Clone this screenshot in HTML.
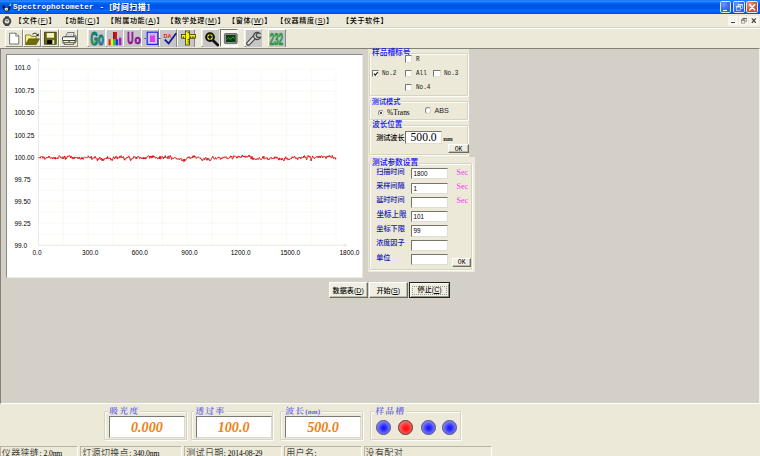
<!DOCTYPE html>
<html><head><meta charset="utf-8"><title>Spectrophotometer</title>
<style>
*{box-sizing:border-box;margin:0;padding:0}
html,body{width:760px;height:456px;overflow:hidden;background:#d4d0c8}
body{position:relative;font-family:"Liberation Sans","Noto Sans CJK SC",sans-serif;font-size:7px;color:#000;line-height:1}
.abs,.abs *{position:absolute}
#all{position:absolute;left:0;top:0;width:760px;height:456px;overflow:hidden}
#all div,#all span,#all svg{position:absolute;white-space:nowrap}
/* title */
#title{left:0;top:0;width:760px;height:14px;background:linear-gradient(to bottom,#0058ee 0%,#3593ff 6%,#288eff 10%,#127dff 14%,#036ffc 18%,#0262ee 26%,#0057e5 34%,#0054e3 44%,#0055eb 56%,#005bf5 66%,#026afe 76%,#0061fc 86%,#0052f0 92%,#004de8 96%,#0144d0 100%)}
.tt{color:#fff;top:3.9px;font-family:"Liberation Mono","Noto Sans CJK SC",monospace;font-weight:bold;font-size:7.7px;letter-spacing:0.13px;text-shadow:0.5px 0.5px 0 #0a2a8a}
.wb{top:1.4px;width:11.6px;height:11.8px;border-radius:1.8px;border:0.6px solid #dfe8ff;background:radial-gradient(circle at 30% 25%,#6b9cf6 0%,#3d75ea 40%,#2457d8 100%)}
#wclose{background:radial-gradient(circle at 30% 25%,#f0a080 0%,#e0603a 40%,#c63a1c 100%)}
/* menu */
#menu{left:0;top:14px;width:760px;height:13px;background:#ece9d8}
.mi{font-weight:500;top:4.3px;letter-spacing:0.6px;font-family:"Liberation Sans","Noto Sans CJK SC",sans-serif;font-size:7.1px;color:#000}
/* toolbar */
#tb{left:0;top:27px;width:760px;height:21px;background:#ece9d8;border-top:1px solid #d6d3c3;box-shadow:inset 0 1px 0 #fff}
.tbn{top:1.6px;width:17.8px;height:17.8px;background:#ece9d8;border-right:1px solid #8c8a7c;border-bottom:1px solid #8c8a7c;border-left:1px solid #fff;border-top:1px solid #fff}
.tbn.g::before{content:"";position:absolute;left:0.2px;top:0.2px;width:16.2px;height:16.2px;background:#c6c6c6}
.tbn svg{left:0;top:0;width:16px;height:16px}
/* mdi */
#mdi{left:0;top:48px;width:760px;height:356.4px;background:#d4d0c8;border-top:1.2px solid #848277;border-left:1.4px solid #848277;border-right:1.4px solid #f4f3ea;border-bottom:1px solid #fff}
#chartbox{left:6px;top:53.6px;width:357px;height:224.4px;background:#fff;border-top:1.4px solid #8d8b80;border-left:1.4px solid #8d8b80;border-right:1px solid #e9e7dd;border-bottom:1px solid #eeece4}
.yl{left:14.4px;text-align:left;font-size:6.5px;color:#000;height:9px;line-height:9px;transform:scaleY(1.18);transform-origin:0 50%}
.xl{text-align:left;top:247.6px;font-size:6.5px;color:#000;height:9px;line-height:9px;transform:scaleY(1.18);transform-origin:0 50%}
/* right panel */
#rp{left:367.5px;top:48.9px;width:101.9px;height:109.1px;background:#ece9d8}
#rp2{left:367.5px;top:157px;width:107px;height:115.4px;background:#ece9d8}
.gb{border:1px solid #d6d3c2;box-shadow:1px 1px 0 #fdfcf8, inset 1px 1px 0 #fdfcf8;border-radius:1px}
.gt{font-weight:500;color:#1010ff;font-size:7.7px;background:#ece9d8;padding:0 1px;height:8px;line-height:8px}
.cb{width:7.2px;height:7.2px;background:#fff;border-top:1px solid #7a786c;border-left:1px solid #7a786c;border-right:0.6px solid #e4e2d6;border-bottom:0.6px solid #e4e2d6}
.cl{font-family:"Liberation Mono","Noto Sans CJK SC",monospace;font-size:7.3px;color:#111;transform:scaleX(0.82);transform-origin:0 0}
.rb{width:6.6px;height:6.6px;border-radius:50%;background:#fff;border:0.9px solid #8a887c;border-right-color:#d8d6ca;border-bottom-color:#d8d6ca}
.inp{background:#fff;border-top:1.1px solid #77756a;border-left:1.1px solid #77756a;border-right:0.8px solid #e0ded2;border-bottom:0.8px solid #e0ded2}
.pl{font-weight:500;color:#1414b4;font-size:7.1px;height:9px;line-height:9px}
.sec{color:#f23cf2;font-family:"Liberation Serif",serif;font-size:8px}
.btn{background:#f0eee2;border-top:0.8px solid #fff;border-left:0.8px solid #fff;border-right:1px solid #6d6b60;border-bottom:1px solid #6d6b60;box-shadow:inset -0.7px -0.7px 0 #aaa89c;text-align:center;font-size:7.1px;font-weight:500;color:#000}
.it{font-size:6.3px;color:#000;left:1.2px;top:2.1px;transform:scaleY(1.15);transform-origin:0 50%}
/* bottom */
#bot{left:0;top:404.4px;width:760px;height:51.6px;background:#ece9d8}
.bgt{color:#5c5cea;font-size:8.6px;background:#ece9d8;padding:0 1px;height:10px;line-height:10px;font-family:"Liberation Serif","Noto Serif CJK SC","Noto Sans CJK SC",serif;font-weight:600;letter-spacing:1.5px;transform:skewX(-4deg);transform-origin:0 100%}
.vbox{background:#fff;border-top:1.3px solid #7c7a6f;border-left:1.3px solid #7c7a6f;border-right:0.8px solid #dcdacf;border-bottom:0.8px solid #dcdacf}
.val{font-family:"Liberation Serif",serif;font-style:italic;font-weight:bold;color:#f08010;font-size:14.1px;width:100%;text-align:center;left:0;top:2.7px;height:14px;line-height:14px}
.led{width:15.2px;height:15.2px;border-radius:50%;border:0.9px solid #4a4880;background:radial-gradient(circle at 52% 54%,#1414f4 0%,#2a2af6 22%,#6a6af8 55%,#a4a4f6 85%,#b4b4f0 100%)}
.led.r{border-color:#5a2c2c;background:radial-gradient(circle at 54% 56%,#ff0808 0%,#ff2020 25%,#f86060 60%,#f09090 88%,#eaa0a0 100%)}
/* status */
.sp{top:446.3px;height:12px;background:#ece9d8;border-top:1px solid #b8b5a6;border-left:1px solid #b8b5a6;border-right:0.7px solid #fff;border-bottom:0.7px solid #fff;overflow:hidden}
.st{left:0.8px;top:0.4px;font-size:9px;font-weight:300;color:#000;font-family:"Liberation Serif","Noto Sans CJK SC",sans-serif;height:11px;line-height:11px;letter-spacing:0.35px}
.st b{font-weight:normal;font-size:7.6px;letter-spacing:-0.1px;position:static;margin-left:-1.2px}
</style></head><body><div id="all">

<div id="title">
 <svg style="left:1px;top:2.5px;width:11px;height:10px" viewBox="0 0 11 10"><path d="M0.8 2.2 L2.6 2 L4.6 4.6 L6.8 5 L8.6 3 L9.6 3.4 L9.2 6.2 L7 8.4 L4.4 8.6 L2.4 6.6 Z" fill="#141a3a"/><path d="M3.6 5.2 Q5.4 4.4 7.2 5.4 L7 7.2 Q5.2 8.2 3.8 7 Z" fill="#f4f4f8"/><path d="M5 6.2 L6.4 6.2 L6 7 L5.2 7Z" fill="#a03030"/><path d="M8.2 2.8 L9.4 0.6 L10.2 1.6 L9.4 3.2Z" fill="#e8d040"/><path d="M8.6 0.8 L9.4 0.2 L9.8 1 Z" fill="#40c050"/><path d="M0.6 1.8 L2.2 2.2 L2 3 Z" fill="#30a0b0"/></svg>
 <div class="tt" style="left:13px">Spectrophotometer</div>
 <div class="tt" style="left:99.4px">-</div>
 <div class="tt" style="left:108.4px">[</div>
 <div class="tt" style="left:112.6px;top:4.9px;letter-spacing:0.8px;font-weight:900">时间扫描</div>
 <div class="tt" style="left:146px">]</div>
 <div class="wb" style="left:719.6px"><div style="left:2.2px;top:7.2px;width:4px;height:1.7px;background:#fff"></div></div>
 <div class="wb" style="left:733px"><svg style="left:0;top:0;width:10.4px;height:10.6px" viewBox="0 0 10.4 10.6"><path d="M4.3 2.9h4.2v3.6h-1.5M4.3 2.9v1.6" fill="none" stroke="#e8eeff" stroke-width="0.6"/><path d="M4 2.8h4.8" stroke="#fff" stroke-width="1"/><rect x="2.5" y="4.8" width="4.2" height="3.6" fill="none" stroke="#e8eeff" stroke-width="0.6"/><path d="M2.2 4.8h4.8" stroke="#fff" stroke-width="1"/></svg></div>
 <div class="wb" id="wclose" style="left:746.4px"><svg style="left:0;top:0;width:10.4px;height:10.6px" viewBox="0 0 10.4 10.6"><path d="M2.6 2.6 L7.8 8 M7.8 2.6 L2.6 8" stroke="#fff" stroke-width="1.5" stroke-linecap="round"/></svg></div>
</div>

<div id="menu">
 <svg style="left:1.6px;top:1.8px;width:10px;height:10.4px" viewBox="0 0 10 10.4"><rect x="2.9" y="0.2" width="4.2" height="10" rx="0.9" fill="#3c3c3c"/><circle cx="5" cy="5.2" r="4.3" fill="#484848"/><circle cx="5" cy="5.2" r="2.3" fill="#e4e4e4"/><path d="M5 5.4 L3.8 4 M5 5.4 L6.2 4" stroke="#222" stroke-width="0.7"/></svg>
 <div class="mi" style="left:14.6px">【文件(<u>F</u>)】</div>
 <div class="mi" style="left:61.5px">【功能(<u>C</u>)】</div>
 <div class="mi" style="left:106.8px">【附属功能(<u>A</u>)】</div>
 <div class="mi" style="left:166.6px">【数学处理(<u>M</u>)】</div>
 <div class="mi" style="left:228px">【窗体(<u>W</u>)】</div>
 <div class="mi" style="left:276.2px">【仪器精度(<u>S</u>)】</div>
 <div class="mi" style="left:342px">【关于软件】</div>
 <div style="left:728.4px;top:2.4px;width:9.2px;height:9.4px;background:#f6f5ee"><div style="left:3px;top:5.6px;width:3.2px;height:1.2px;background:#444"></div></div>
 <div style="left:739px;top:2.4px;width:9.2px;height:9.4px;background:#f6f5ee"><svg style="left:0;top:0;width:9.2px;height:9.4px" viewBox="0 0 9.2 9.4"><path d="M3.9 2.5h3.6v3h-1.4M3.9 2.5v1.4" fill="none" stroke="#666" stroke-width="0.55"/><path d="M3.7 2.4h4" stroke="#555" stroke-width="0.9"/><rect x="2.3" y="4.1" width="3.6" height="3" fill="none" stroke="#666" stroke-width="0.55"/><path d="M2.1 4.1h4" stroke="#555" stroke-width="0.9"/></svg></div>
 <div style="left:749.4px;top:2.4px;width:9.2px;height:9.4px;background:#f6f5ee"><svg style="left:0;top:0;width:9.2px;height:9.4px" viewBox="0 0 9.2 9.4"><path d="M2.8 2.4 L6.8 6.8 M6.8 2.4 L2.8 6.8" stroke="#3a3a3a" stroke-width="1.2"/></svg></div>
</div>

<div id="tb">
<div class="tbn " style="left:5.4px;top:1.2px;width:17.8px;height:17.8px"></div><div class="tbn " style="left:23.2px;top:1.2px;width:18.0px;height:17.8px"></div><div class="tbn " style="left:41.2px;top:1.2px;width:18.0px;height:17.8px"></div><div class="tbn " style="left:59.2px;top:1.2px;width:18.4px;height:17.8px"></div><div class="tbn g" style="left:87.4px;top:1.2px;width:18.0px;height:17.8px"></div><div class="tbn g" style="left:105.4px;top:1.2px;width:17.8px;height:17.8px"></div><div class="tbn g" style="left:123.2px;top:1.2px;width:17.8px;height:17.8px"></div><div class="tbn g" style="left:141.0px;top:1.2px;width:17.8px;height:17.8px"></div><div class="tbn g" style="left:158.8px;top:1.2px;width:17.8px;height:17.8px"></div><div class="tbn g" style="left:176.6px;top:1.2px;width:18.0px;height:17.8px"></div><div class="tbn g" style="left:201.4px;top:1.2px;width:18.0px;height:17.8px"></div><div class="tbn g" style="left:244.4px;top:1.2px;width:18.0px;height:17.8px"></div><div class="tbn g" style="left:268.0px;top:1.2px;width:18.0px;height:17.8px"></div><div style="left:219.6px;top:1.2px;width:18.6px;height:17.8px;background:#f6f5ef;border-top:1px solid #77756a;border-left:1px solid #77756a;border-right:1px solid #fff;border-bottom:1px solid #fff"></div><svg style="left:0;top:-1.0px;width:300px;height:22px" viewBox="0 27 300 22"><path d="M9.6 33.2 L15.8 33.2 L18.8 36.2 L18.8 44 L9.6 44 Z" fill="#fff" stroke="#4a4a4a" stroke-width="0.75"/><path d="M15.8 33.2 L15.8 36.2 L18.8 36.2" fill="none" stroke="#4a4a4a" stroke-width="0.6"/><path d="M25.6 35 L25.6 44.2 L36.2 44.2 L36.2 36.4 L31.4 36.4 L30.4 35 Z" fill="#e8e84e" stroke="#55551a" stroke-width="0.7"/><path d="M26.2 35.8 L30 35.8 L31 37.2 L35.4 37.2 L35.4 38.4 L28.4 38.4 L26.2 42 Z" fill="#f4f49a"/><path d="M25.6 44.4 L28.8 38.8 L39.6 38.8 L36.2 44.4 Z" fill="#6e6e0c" stroke="#4a4a08" stroke-width="0.5"/><path d="M32.4 34.2 Q35 31.6 37.6 34.6" fill="none" stroke="#222" stroke-width="0.9"/><path d="M39 33.4 L38.4 36.6 L35.8 35.4 Z" fill="#222"/><rect x="44.6" y="32.2" width="11.6" height="12" fill="#6c6c0e" stroke="#33330a" stroke-width="0.8"/><rect x="46.8" y="33" width="7.2" height="4.7" fill="#f2f2c6"/><rect x="47.1" y="40.1" width="5.3" height="3.9" fill="#050505"/><rect x="52.4" y="40.1" width="1.8" height="3.9" fill="#ececb4"/><path d="M65.4 36.8 L67.6 32.5 L74.2 32.5 L73 36.8 Z" fill="#f6f6f6" stroke="#444" stroke-width="0.7"/><path d="M68 34 L72.6 34 M67.4 35.2 L72 35.2" stroke="#999" stroke-width="0.5"/><path d="M73 36.8 L75.4 35 L76.3 36.2 L76.3 41.4 L75.4 42.6 Z" fill="#b4b4b0" stroke="#444" stroke-width="0.6"/><rect x="62.5" y="36.8" width="13" height="3.7" rx="0.9" fill="#fafafa" stroke="#333" stroke-width="0.9"/><rect x="63" y="40.5" width="12" height="2.4" fill="#f0f0bc" stroke="#333" stroke-width="0.8"/><rect x="68.4" y="41.2" width="1.6" height="0.9" fill="#3a6a2a"/><rect x="64.2" y="42.9" width="9.6" height="1.7" fill="#fff" stroke="#444" stroke-width="0.7"/><text x="90.4" y="45" font-family="Liberation Sans, sans-serif" font-weight="bold" font-size="19" fill="#1a967e" stroke="#0f6f66" stroke-width="1.1" stroke-linejoin="round" textLength="13.4" lengthAdjust="spacingAndGlyphs">Go</text><rect x="93" y="41.2" width="2" height="2.4" fill="#46d040"/><rect x="99.6" y="41.8" width="2.4" height="2" fill="#7a60e0"/><rect x="113.2" y="32" width="3.8" height="7.4" fill="#d01818"/><rect x="108.6" y="39.2" width="2.2" height="6" fill="#e02020"/><rect x="110.8" y="39.2" width="2.2" height="6" fill="#f0f020"/><rect x="113" y="39.2" width="2.6" height="6" fill="#20d030"/><rect x="115.6" y="39.2" width="2.6" height="6" fill="#2030e8"/><rect x="119" y="37.6" width="2.4" height="7.6" fill="#a020c0"/><rect x="113.2" y="32" width="1.2" height="7.2" fill="#801010"/><text font-family="Liberation Sans, sans-serif" font-weight="bold" fill="#a012a4" stroke="#860c8c" stroke-width="0.7"><tspan x="127.3" y="43.6" font-size="16.4" textLength="6.3" lengthAdjust="spacingAndGlyphs">U</tspan><tspan x="134.4" y="43.6" font-size="13.6" textLength="6.4" lengthAdjust="spacingAndGlyphs">o</tspan></text><rect x="147.2" y="32.2" width="10.6" height="12.2" fill="#c4c4ff" stroke="#1c1ce0" stroke-width="1.1"/><rect x="150" y="35.4" width="5" height="6.6" fill="#e43ce4"/><rect x="150" y="33.6" width="5" height="1.2" fill="#e89af0"/><circle cx="145.2" cy="38.4" r="0.7" fill="#2020d0"/><circle cx="159.8" cy="38.4" r="0.7" fill="#2020d0"/><text x="163.6" y="37.6" font-family="Liberation Sans, sans-serif" font-weight="bold" font-size="5.6" fill="#e02020" textLength="8" lengthAdjust="spacingAndGlyphs">DA</text><path d="M164.8 39.6 L168.6 43.4 L176.2 33.2" fill="none" stroke="#14148c" stroke-width="1.7"/><rect x="181.4" y="34.4" width="14.2" height="3.8" fill="#f4f410" stroke="#2a2a00" stroke-width="0.7"/><rect x="185.6" y="31" width="3.8" height="14" fill="#f4f410" stroke="#2a2a00" stroke-width="0.7"/><rect x="185.8" y="34.6" width="3.4" height="3.4" fill="#f4f410"/><path d="M190.5 36.4v1.8M192.3 36.4v1.8M194 36.4v1.8M183.4 36.4v1.8M187.6 39.4h1.8M187.6 41.2h1.8M187.6 43h1.8M187.6 32.6h1.8" stroke="#111" stroke-width="0.7"/><path d="M212.8 40.2 L217.8 45" stroke="#111" stroke-width="2.6" stroke-linecap="round"/><circle cx="210" cy="37.1" r="3.9" fill="#f2f21c" stroke="#111" stroke-width="2"/><path d="M207.6 37.1h4.8M210 34.7v4.8" stroke="#111" stroke-width="1.5"/><rect x="224.4" y="33.6" width="12.8" height="10" rx="0.8" fill="#8c8c8c" stroke="#333" stroke-width="0.6"/><rect x="226" y="35" width="9.6" height="7" fill="#0e3c12"/><path d="M226.6 39.6 L228.6 37.6 L230.6 39.4 L232.8 37 L235 38.6" fill="none" stroke="#38d048" stroke-width="0.7"/><path d="M248.4 43.6 L255 36.6" stroke="#444" stroke-width="4.4" stroke-linecap="round"/><path d="M248.4 43.4 L255 36.4" stroke="#e0e0e0" stroke-width="2.2" stroke-linecap="round"/><path d="M259.6 33.2 A3.6 3.6 0 1 0 260.6 37.2 L257.4 37.6 L256 35.2 L257.6 32.8 Z" fill="#d4d4d4" stroke="#444" stroke-width="1.2"/><text x="269.4" y="44.6" font-family="Liberation Sans, sans-serif" font-weight="bold" font-size="16.8" fill="#2fa044" stroke="#258a38" stroke-width="0.6" textLength="13.8" lengthAdjust="spacingAndGlyphs">232</text></svg>
</div>

<div id="mdi"></div>
<div id="chartbox"></div>
<svg style="left:0;top:0;width:380px;height:290px" viewBox="0 0 380 290">
 <g stroke="#f1f0e3" stroke-width="0.7" stroke-dasharray="1.2 0.8"><line x1="38.50" y1="69.2" x2="38.50" y2="245.3"/><line x1="63.29" y1="69.2" x2="63.29" y2="245.3"/><line x1="88.08" y1="69.2" x2="88.08" y2="245.3"/><line x1="112.88" y1="69.2" x2="112.88" y2="245.3"/><line x1="137.67" y1="69.2" x2="137.67" y2="245.3"/><line x1="162.46" y1="69.2" x2="162.46" y2="245.3"/><line x1="187.25" y1="69.2" x2="187.25" y2="245.3"/><line x1="212.04" y1="69.2" x2="212.04" y2="245.3"/><line x1="236.83" y1="69.2" x2="236.83" y2="245.3"/><line x1="261.62" y1="69.2" x2="261.62" y2="245.3"/><line x1="286.42" y1="69.2" x2="286.42" y2="245.3"/><line x1="311.21" y1="69.2" x2="311.21" y2="245.3"/><line x1="336.00" y1="69.2" x2="336.00" y2="245.3"/><line x1="38.5" y1="69.20" x2="336.0" y2="69.20"/><line x1="38.5" y1="80.21" x2="336.0" y2="80.21"/><line x1="38.5" y1="91.21" x2="336.0" y2="91.21"/><line x1="38.5" y1="102.22" x2="336.0" y2="102.22"/><line x1="38.5" y1="113.23" x2="336.0" y2="113.23"/><line x1="38.5" y1="124.23" x2="336.0" y2="124.23"/><line x1="38.5" y1="135.24" x2="336.0" y2="135.24"/><line x1="38.5" y1="146.24" x2="336.0" y2="146.24"/><line x1="38.5" y1="157.25" x2="336.0" y2="157.25"/><line x1="38.5" y1="168.26" x2="336.0" y2="168.26"/><line x1="38.5" y1="179.26" x2="336.0" y2="179.26"/><line x1="38.5" y1="190.27" x2="336.0" y2="190.27"/><line x1="38.5" y1="201.28" x2="336.0" y2="201.28"/><line x1="38.5" y1="212.28" x2="336.0" y2="212.28"/><line x1="38.5" y1="223.29" x2="336.0" y2="223.29"/><line x1="38.5" y1="234.29" x2="336.0" y2="234.29"/><line x1="38.5" y1="245.30" x2="336.0" y2="245.30"/></g>
 <g stroke="#e9e9df" stroke-width="0.9" fill="none"><path d="M38.5 245.3 L38.5 58.5 M37.2 61.5 L38.5 58 L39.8 61.5"/><path d="M38.5 245.3 L347 245.3 M343.5 244 L347.2 245.3 L343.5 246.6"/></g>
 <polyline points="38.5,157.77 38.9,157.20 39.2,157.49 39.6,157.71 40.0,158.34 40.4,158.07 40.7,156.81 41.1,156.68 41.5,156.10 41.8,156.43 42.2,156.50 42.6,156.71 43.0,158.38 43.3,157.19 43.7,156.84 44.1,156.66 44.5,158.40 44.8,159.42 45.2,159.27 45.6,158.86 45.9,157.99 46.3,157.83 46.7,157.27 47.1,157.96 47.4,157.56 47.8,157.28 48.2,158.02 48.5,156.45 48.9,156.58 49.3,156.12 49.7,157.40 50.0,158.22 50.4,158.34 50.8,158.22 51.1,157.55 51.5,157.50 51.9,158.06 52.3,158.79 52.6,158.83 53.0,157.40 53.4,158.30 53.7,157.91 54.1,157.54 54.5,158.93 54.9,158.39 55.2,157.03 55.6,159.05 56.0,158.73 56.4,158.36 56.7,158.73 57.1,157.81 57.5,157.76 57.8,158.88 58.2,157.56 58.6,156.94 59.0,156.35 59.3,155.59 59.7,156.05 60.1,156.49 60.4,157.89 60.8,157.04 61.2,157.58 61.6,157.73 61.9,158.47 62.3,158.61 62.7,158.31 63.0,156.61 63.4,158.44 63.8,158.95 64.2,157.81 64.5,156.17 64.9,155.98 65.3,157.95 65.6,159.55 66.0,158.03 66.4,158.11 66.8,158.49 67.1,156.95 67.5,156.01 67.9,156.29 68.2,156.39 68.6,156.30 69.0,155.30 69.4,155.59 69.7,155.85 70.1,156.00 70.5,157.87 70.9,156.54 71.2,156.11 71.6,156.26 72.0,158.46 72.3,158.58 72.7,157.44 73.1,159.06 73.5,158.62 73.8,157.40 74.2,158.71 74.6,157.01 74.9,156.99 75.3,157.59 75.7,157.54 76.1,157.27 76.4,157.59 76.8,156.92 77.2,158.09 77.5,158.54 77.9,157.58 78.3,157.92 78.7,158.87 79.0,157.88 79.4,156.90 79.8,157.97 80.2,159.34 80.5,159.06 80.9,158.91 81.3,158.95 81.6,157.55 82.0,158.80 82.4,157.57 82.8,159.00 83.1,159.38 83.5,158.39 83.9,157.41 84.2,157.09 84.6,157.33 85.0,157.62 85.4,157.76 85.7,157.46 86.1,157.92 86.5,157.78 86.8,157.44 87.2,157.72 87.6,157.22 88.0,157.10 88.3,155.82 88.7,156.52 89.1,157.52 89.4,158.03 89.8,158.00 90.2,157.19 90.6,157.81 90.9,157.54 91.3,156.18 91.7,159.12 92.0,159.54 92.4,158.64 92.8,158.02 93.2,157.83 93.5,158.29 93.9,157.66 94.3,157.64 94.7,158.31 95.0,156.24 95.4,156.85 95.8,157.97 96.1,158.23 96.5,158.50 96.9,158.54 97.3,160.81 97.6,160.22 98.0,158.66 98.4,159.65 98.7,159.30 99.1,158.27 99.5,157.82 99.9,157.06 100.2,159.33 100.6,159.47 101.0,159.56 101.3,158.82 101.7,158.03 102.1,160.78 102.5,159.14 102.8,160.37 103.2,159.28 103.6,160.50 104.0,159.78 104.3,158.54 104.7,158.97 105.1,158.93 105.4,158.39 105.8,158.64 106.2,158.96 106.6,157.76 106.9,157.50 107.3,158.46 107.7,156.43 108.0,158.56 108.4,157.98 108.8,158.63 109.2,158.63 109.5,158.12 109.9,158.23 110.3,157.91 110.6,159.52 111.0,160.37 111.4,159.03 111.8,159.58 112.1,159.92 112.5,160.44 112.9,158.42 113.2,157.72 113.6,156.70 114.0,158.13 114.4,158.11 114.7,159.03 115.1,157.93 115.5,156.61 115.8,157.95 116.2,156.62 116.6,156.35 117.0,157.17 117.3,159.11 117.7,157.34 118.1,157.62 118.5,158.20 118.8,157.67 119.2,157.38 119.6,156.31 119.9,157.83 120.3,156.86 120.7,156.05 121.1,155.63 121.4,156.78 121.8,157.90 122.2,157.04 122.5,157.34 122.9,157.51 123.3,156.53 123.7,157.42 124.0,159.62 124.4,159.24 124.8,160.28 125.1,158.62 125.5,158.15 125.9,158.67 126.3,158.47 126.6,157.66 127.0,157.85 127.4,156.92 127.8,157.58 128.1,157.02 128.5,156.34 128.9,155.87 129.2,157.51 129.6,157.12 130.0,159.20 130.4,159.68 130.7,160.66 131.1,158.66 131.5,159.47 131.8,158.88 132.2,158.69 132.6,158.43 133.0,158.74 133.3,158.20 133.7,156.58 134.1,157.13 134.4,156.99 134.8,156.50 135.2,157.21 135.6,158.46 135.9,158.53 136.3,157.18 136.7,158.69 137.0,158.61 137.4,157.20 137.8,156.58 138.2,156.86 138.5,156.33 138.9,156.55 139.3,157.77 139.7,158.74 140.0,158.48 140.4,157.02 140.8,157.44 141.1,157.94 141.5,158.09 141.9,158.80 142.3,158.00 142.6,158.44 143.0,157.39 143.4,159.09 143.7,157.77 144.1,157.86 144.5,159.01 144.9,157.41 145.2,157.38 145.6,159.01 146.0,158.78 146.3,157.70 146.7,157.74 147.1,156.75 147.5,156.25 147.8,156.06 148.2,156.27 148.6,155.56 148.9,155.76 149.3,156.06 149.7,158.37 150.1,157.18 150.4,156.20 150.8,157.03 151.2,157.65 151.6,156.00 151.9,158.21 152.3,157.58 152.7,155.62 153.0,157.37 153.4,157.00 153.8,155.80 154.2,156.84 154.5,156.86 154.9,156.59 155.3,157.97 155.6,158.05 156.0,157.79 156.4,157.20 156.8,157.60 157.1,157.95 157.5,158.83 157.9,158.77 158.2,157.68 158.6,157.74 159.0,158.56 159.4,159.00 159.7,156.29 160.1,156.07 160.5,156.36 160.8,159.21 161.2,158.07 161.6,157.55 162.0,156.25 162.3,156.56 162.7,157.14 163.1,156.95 163.4,158.89 163.8,157.46 164.2,157.25 164.6,157.99 164.9,156.68 165.3,155.55 165.7,157.61 166.1,158.12 166.4,157.59 166.8,157.39 167.2,157.77 167.5,158.46 167.9,156.25 168.3,155.94 168.7,157.65 169.0,158.72 169.4,156.77 169.8,156.31 170.1,155.37 170.5,155.72 170.9,157.34 171.3,157.30 171.6,159.32 172.0,159.27 172.4,158.70 172.7,157.92 173.1,158.56 173.5,158.44 173.9,157.91 174.2,157.72 174.6,157.42 175.0,157.65 175.3,158.25 175.7,157.67 176.1,158.00 176.5,158.95 176.8,159.33 177.2,159.04 177.6,159.00 178.0,158.78 178.3,158.81 178.7,158.70 179.1,158.92 179.4,160.00 179.8,159.21 180.2,158.25 180.6,158.26 180.9,158.80 181.3,158.57 181.7,159.63 182.0,161.00 182.4,160.11 182.8,160.46 183.2,159.24 183.5,160.10 183.9,161.85 184.3,161.48 184.6,159.08 185.0,159.38 185.4,160.36 185.8,160.38 186.1,159.30 186.5,158.70 186.9,158.63 187.2,157.47 187.6,157.46 188.0,158.05 188.4,157.83 188.7,156.81 189.1,156.79 189.5,156.72 189.9,158.42 190.2,158.56 190.6,157.88 191.0,158.34 191.3,157.44 191.7,157.32 192.1,156.98 192.5,157.72 192.8,155.80 193.2,155.83 193.6,157.06 193.9,157.47 194.3,155.59 194.7,157.02 195.1,156.78 195.4,156.56 195.8,157.26 196.2,158.62 196.5,158.25 196.9,157.90 197.3,157.08 197.7,156.92 198.0,157.48 198.4,157.11 198.8,157.18 199.2,157.51 199.5,157.83 199.9,158.27 200.3,157.75 200.6,158.94 201.0,159.25 201.4,158.91 201.8,159.96 202.1,159.70 202.5,160.88 202.9,160.44 203.2,159.16 203.6,158.47 204.0,158.62 204.4,158.85 204.7,159.98 205.1,157.89 205.5,157.85 205.8,157.34 206.2,158.71 206.6,158.88 207.0,160.34 207.3,158.95 207.7,158.06 208.1,159.92 208.4,159.39 208.8,158.51 209.2,160.02 209.6,160.88 209.9,160.69 210.3,160.21 210.7,160.56 211.1,159.53 211.4,158.76 211.8,157.99 212.2,157.47 212.5,156.49 212.9,156.21 213.3,158.09 213.7,158.43 214.0,159.04 214.4,159.36 214.8,158.68 215.1,158.20 215.5,157.50 215.9,158.83 216.3,159.24 216.6,158.42 217.0,158.10 217.4,157.99 217.7,157.70 218.1,158.11 218.5,157.09 218.9,156.80 219.2,157.00 219.6,157.59 220.0,157.49 220.3,159.55 220.7,159.23 221.1,158.20 221.5,158.92 221.8,157.89 222.2,157.37 222.6,158.36 222.9,157.97 223.3,157.82 223.7,157.10 224.1,156.59 224.4,156.86 224.8,157.71 225.2,157.60 225.6,157.49 225.9,156.78 226.3,156.77 226.7,157.64 227.0,158.66 227.4,158.42 227.8,158.61 228.2,159.05 228.5,158.47 228.9,158.49 229.3,158.01 229.6,157.42 230.0,157.89 230.4,155.87 230.8,156.98 231.1,156.41 231.5,156.93 231.9,156.39 232.2,159.02 232.6,159.11 233.0,158.33 233.4,157.60 233.7,155.75 234.1,156.41 234.5,155.97 234.8,156.15 235.2,156.09 235.6,156.41 236.0,157.13 236.3,156.96 236.7,158.18 237.1,156.95 237.5,158.10 237.8,157.65 238.2,155.82 238.6,156.76 238.9,157.06 239.3,156.24 239.7,156.73 240.1,157.68 240.4,157.29 240.8,156.79 241.2,156.39 241.5,157.40 241.9,155.83 242.3,155.02 242.7,155.95 243.0,156.24 243.4,156.97 243.8,155.83 244.1,156.97 244.5,156.44 244.9,157.11 245.3,157.66 245.6,156.79 246.0,155.80 246.4,156.39 246.8,157.28 247.1,156.54 247.5,156.87 247.9,156.76 248.2,155.71 248.6,155.47 249.0,156.75 249.4,155.13 249.7,156.17 250.1,156.11 250.5,157.31 250.8,157.49 251.2,159.05 251.6,156.97 252.0,156.21 252.3,157.99 252.7,159.23 253.1,160.05 253.4,158.18 253.8,158.56 254.2,158.46 254.6,158.64 254.9,158.61 255.3,159.43 255.7,158.97 256.0,159.97 256.4,159.39 256.8,158.78 257.2,158.32 257.5,158.68 257.9,159.45 258.3,158.99 258.6,159.29 259.0,157.75 259.4,157.58 259.8,158.22 260.1,158.88 260.5,159.43 260.9,159.93 261.3,159.71 261.6,159.05 262.0,158.49 262.4,158.13 262.7,156.64 263.1,158.15 263.5,158.37 263.9,156.16 264.2,158.82 264.6,159.15 265.0,158.73 265.3,158.50 265.7,158.14 266.1,158.47 266.5,158.13 266.8,158.19 267.2,157.61 267.6,159.50 267.9,159.69 268.3,159.04 268.7,159.53 269.1,159.80 269.4,158.55 269.8,158.92 270.2,158.04 270.6,157.46 270.9,157.51 271.3,157.37 271.7,157.80 272.0,159.14 272.4,158.72 272.8,158.09 273.2,158.58 273.5,158.50 273.9,157.76 274.3,158.72 274.6,158.00 275.0,156.59 275.4,157.86 275.8,157.98 276.1,158.32 276.5,157.11 276.9,157.49 277.2,157.23 277.6,158.44 278.0,158.56 278.4,158.64 278.7,160.18 279.1,158.36 279.5,157.83 279.8,159.77 280.2,158.77 280.6,158.97 281.0,158.61 281.3,158.49 281.7,160.00 282.1,159.76 282.4,158.21 282.8,159.09 283.2,159.96 283.6,160.71 283.9,161.02 284.3,159.88 284.7,158.11 285.1,158.19 285.4,158.38 285.8,156.80 286.2,158.23 286.5,159.13 286.9,158.60 287.3,158.27 287.7,159.38 288.0,160.10 288.4,159.24 288.8,158.79 289.1,159.81 289.5,159.42 289.9,159.46 290.3,158.62 290.6,158.61 291.0,158.55 291.4,158.71 291.7,157.59 292.1,156.66 292.5,157.60 292.9,157.07 293.2,158.09 293.6,157.93 294.0,157.25 294.4,156.22 294.7,157.21 295.1,157.48 295.5,157.38 295.8,158.72 296.2,158.18 296.6,158.45 297.0,157.71 297.3,158.55 297.7,159.71 298.1,158.65 298.4,157.89 298.8,158.14 299.2,157.07 299.6,157.46 299.9,157.96 300.3,157.33 300.7,158.70 301.0,158.72 301.4,158.19 301.8,157.18 302.2,157.48 302.5,157.27 302.9,157.97 303.3,157.57 303.6,156.22 304.0,157.46 304.4,155.60 304.8,157.11 305.1,157.40 305.5,157.45 305.9,156.77 306.2,158.30 306.6,159.88 307.0,158.49 307.4,157.58 307.7,157.23 308.1,155.36 308.5,156.37 308.9,156.88 309.2,156.60 309.6,156.91 310.0,156.00 310.3,157.92 310.7,158.25 311.1,160.99 311.5,158.92 311.8,158.77 312.2,157.58 312.6,155.89 312.9,156.75 313.3,157.41 313.7,157.96 314.1,158.53 314.4,158.64 314.8,157.62 315.2,157.54 315.5,157.45 315.9,157.58 316.3,156.72 316.7,156.57 317.0,157.00 317.4,156.53 317.8,156.94 318.1,157.98 318.5,156.35 318.9,156.26 319.3,157.39 319.6,156.28 320.0,156.28 320.4,157.86 320.8,156.06 321.1,156.13 321.5,155.69 321.9,156.02 322.2,156.49 322.6,157.92 323.0,156.60 323.4,156.66 323.7,156.97 324.1,156.61 324.5,156.65 324.8,156.18 325.2,156.82 325.6,156.90 326.0,158.72 326.3,158.31 326.7,157.18 327.1,156.03 327.4,156.84 327.8,157.11 328.2,155.86 328.6,156.80 328.9,156.45 329.3,155.50 329.7,156.37 330.1,155.89 330.4,157.27 330.8,157.29 331.2,157.57 331.5,157.58 331.9,156.77 332.3,155.29 332.7,157.06 333.0,157.98 333.4,157.61 333.8,158.72 334.1,158.05 334.5,157.64 334.9,158.14 335.3,157.75 335.6,159.28 336.0,158.21" fill="none" stroke="#e01414" stroke-width="1.0" stroke-linejoin="round"/>
</svg>
<div class="yl" style="top:63.0px">101.0</div><div class="yl" style="top:86.1px">100.75</div><div class="yl" style="top:107.8px">100.50</div><div class="yl" style="top:130.9px">100.25</div><div class="yl" style="top:152.5px">100.00</div><div class="yl" style="top:174.9px">99.75</div><div class="yl" style="top:197.1px">99.50</div><div class="yl" style="top:219.3px">99.25</div><div class="yl" style="top:241.1px">99.0</div><div class="xl" style="left:32.5px">0.0</div><div class="xl" style="left:82.1px">300.0</div><div class="xl" style="left:131.7px">600.0</div><div class="xl" style="left:181.3px">900.0</div><div class="xl" style="left:230.7px">1200.0</div><div class="xl" style="left:280.2px">1500.0</div><div class="xl" style="left:339.5px">1800.0</div>

<div id="rp"></div><div id="rp2"></div>
<div class="gb" style="left:368.6px;top:53.2px;width:99.0px;height:42.8px"></div><div class="gt" style="left:371.0px;top:49.3px;font-size:7.70px">样品槽标号</div><div class="cb" style="left:405.2px;top:55.4px"></div><div class="cl" style="left:415.6px;top:55.6px">R</div><div class="cb" style="left:372.0px;top:69.6px"><svg style="left:0;top:0;width:5.6px;height:5.6px" viewBox="0 0 5.6 5.6"><path d="M0.9 2.6 L2.3 4.2 L4.9 1" fill="none" stroke="#111" stroke-width="1.1"/></svg></div><div class="cl" style="left:381.8px;top:70.0px">No.2</div><div class="cb" style="left:405.2px;top:69.6px"></div><div class="cl" style="left:415.6px;top:70.0px">All</div><div class="cb" style="left:433.4px;top:69.6px"></div><div class="cl" style="left:443.8px;top:70.0px">No.3</div><div class="cb" style="left:405.2px;top:83.6px"></div><div class="cl" style="left:415.6px;top:84.0px">No.4</div><div class="gb" style="left:368.6px;top:100.9px;width:99.0px;height:18.7px"></div><div class="gt" style="left:370.8px;top:97.6px;font-size:7.15px">测试模式</div><div class="rb" style="left:377.5px;top:109.7px"><div style="left:1.5px;top:1.5px;width:2.2px;height:2.2px;border-radius:50%;background:#111"></div></div><div style="left:387px;top:109px;font-family:'Liberation Serif',serif;font-size:7.4px;color:#000">%Trans</div><div class="rb" style="left:424.9px;top:107px"></div><div style="left:434.4px;top:106.9px;font-family:'Liberation Sans',sans-serif;font-size:7.2px;color:#222">ABS</div><div class="gb" style="left:368.6px;top:124.5px;width:99.0px;height:30.1px"></div><div class="gt" style="left:371.2px;top:120.8px;font-size:7.50px">波长位置</div><div style="left:376.2px;top:135px;font-size:7.1px;font-weight:500;color:#000">测试波长</div><div class="inp" style="left:404.8px;top:130.6px;width:37.6px;height:13.2px"><span style="left:0;width:100%;text-align:center;top:0.2px;font-family:'Liberation Serif',serif;font-size:11.6px;line-height:12px;color:#000">500.0</span></div><div style="left:443.2px;top:136.2px;font-family:'Liberation Serif',serif;font-size:6.8px;font-weight:bold;color:#222">nm</div><div class="btn" style="left:448px;top:144.4px;width:21px;height:8.8px"><span style="left:0;width:100%;top:1.2px;text-align:center;font-family:'Liberation Mono',monospace;font-size:6.4px">OK</span></div><div class="gb" style="left:368.6px;top:163.0px;width:103.8px;height:107.4px"></div><div class="gt" style="left:371.0px;top:158.6px;font-size:7.70px">测试参数设置</div><div class="pl" style="left:376.2px;top:168.0px;font-size:7.1px">扫描时间</div><div class="inp" style="left:411.2px;top:168.2px;width:36.6px;height:11.3px"><span class="it">1800</span></div><div class="sec" style="left:456.6px;top:168.8px">Sec</div><div class="pl" style="left:376.2px;top:182.0px;font-size:7.1px">采样间隔</div><div class="inp" style="left:411.2px;top:182.6px;width:36.6px;height:11.3px"><span class="it">1</span></div><div class="sec" style="left:456.6px;top:183.2px">Sec</div><div class="pl" style="left:376.2px;top:196.0px;font-size:7.1px">延时时间</div><div class="inp" style="left:411.2px;top:196.8px;width:36.6px;height:11.3px"></div><div class="sec" style="left:456.6px;top:197.4px">Sec</div><div class="pl" style="left:376.6px;top:210.3px;font-size:7.5px">坐标上限</div><div class="inp" style="left:411.2px;top:211.2px;width:36.6px;height:11.3px"><span class="it">101</span></div><div class="pl" style="left:376.2px;top:223.9px;font-size:7.2px">坐标下限</div><div class="inp" style="left:411.2px;top:225.4px;width:36.6px;height:11.3px"><span class="it">99</span></div><div class="pl" style="left:376.2px;top:239.0px;font-size:7.1px">浓度因子</div><div class="inp" style="left:411.2px;top:240.0px;width:36.6px;height:11.3px"></div><div class="pl" style="left:376.2px;top:253.7px;font-size:7.1px">单位</div><div class="inp" style="left:411.2px;top:254.2px;width:36.6px;height:11.3px"></div><div class="btn" style="left:452px;top:257.8px;width:19.4px;height:9.4px"><span style="left:0;width:100%;top:1.5px;text-align:center;font-family:'Liberation Mono',monospace;font-size:6.4px">OK</span></div>
<div class="btn" style="left:328.6px;top:282.4px;width:39.2px;height:15.8px"><span style="left:0;width:100%;top:4.2px;text-align:center">数据表(<u>D</u>)</span></div>
<div class="btn" style="left:368.6px;top:282.4px;width:39.4px;height:15.8px"><span style="left:0;width:100%;top:4.2px;text-align:center">开始(<u>S</u>)</span></div>
<div class="btn" style="left:409px;top:282.2px;width:41.2px;height:16.2px;border:1px solid #222;box-shadow:inset 0.8px 0.8px 0 #fff, inset -0.8px -0.8px 0 #77756a"><span style="left:0;width:100%;top:4.2px;text-align:center">停止(<u>C</u>)</span><div style="left:2.4px;top:2.4px;right:2.4px;bottom:2.4px;border:0.5px dotted #9a988c"></div></div>

<div id="bot">
<div class="gb" style="left:104.1px;top:6.9px;width:82.7px;height:28.9px"></div><div class="bgt" style="left:107.7px;top:1.4px">吸光度</div><div class="vbox" style="left:108.8px;top:11.8px;width:76.2px;height:21.8px"><div class="val">0.000</div></div><div class="gb" style="left:190.8px;top:6.9px;width:82.7px;height:28.9px"></div><div class="bgt" style="left:194.4px;top:1.4px">透过率</div><div class="vbox" style="left:195.5px;top:11.8px;width:76.2px;height:21.8px"><div class="val">100.0</div></div><div class="gb" style="left:280.2px;top:6.9px;width:82.8px;height:28.9px"></div><div class="bgt" style="left:283.8px;top:1.4px">波长<span style="position:static;font-size:6.8px;letter-spacing:0.2px;font-weight:bold">(nm)</span></div><div class="vbox" style="left:284.9px;top:11.8px;width:76.2px;height:21.8px"><div class="val">500.0</div></div><div class="gb" style="left:370px;top:6.4px;width:91px;height:29px"></div><div class="bgt" style="left:374.2px;top:1.8px">样品槽</div><div class="led" style="left:376.1px;top:15.6px"></div><div class="led r" style="left:397.9px;top:15.6px"></div><div class="led" style="left:420.5px;top:15.6px"></div><div class="led" style="left:442.3px;top:15.6px"></div>
</div>

<div class="sp" style="left:0.0px;width:78.4px"><div class="st">仪器狭缝: <b>2.0nm</b></div></div><div class="sp" style="left:80.4px;width:101.2px"><div class="st">灯源切换点: <b>340.0nm</b></div></div><div class="sp" style="left:184.4px;width:97.6px"><div class="st">测试日期: <b>2014-08-29</b></div></div><div class="sp" style="left:284.4px;width:77.4px"><div class="st">用户名:</div></div><div class="sp" style="left:363.8px;width:127.8px"><div class="st">没有配对</div></div>

</div></body></html>
